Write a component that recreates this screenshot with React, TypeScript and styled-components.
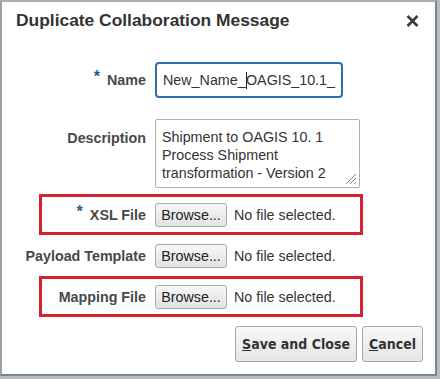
import React from "react";
import styled, { createGlobalStyle, css } from "styled-components";

const GlobalStyle = createGlobalStyle`
  html, body {
    margin: 0;
    padding: 0;
    background: #b8bdc2;
  }
  * {
    box-sizing: border-box;
  }
`;

const Dialog = styled.div`
  width: 437px;
  height: 376px;
  background: #ffffff;
  border: 2px solid #7c848c;
  border-top-color: #a9aeb3;
  border-left-color: #9aa1a8;
  display: flex;
  flex-direction: column;
  font-family: "Liberation Sans", Arial, sans-serif;
  color: #333333;
`;

const Header = styled.div`
  height: 60px;
  padding: 8px 16px 0 14px;
  display: flex;
  align-items: flex-start;
  justify-content: space-between;
`;

const Title = styled.h1`
  margin: 0;
  font-size: 17.4px;
  line-height: 20px;
  font-weight: bold;
  color: #333333;
`;

const CloseButton = styled.button`
  margin-top: 5px;
  padding: 0;
  border: 0;
  background: none;
  width: 13px;
  height: 12px;
  display: flex;
  cursor: pointer;
`;

const Form = styled.div`
  display: flex;
  flex-direction: column;
  padding-left: 37px;
`;

const Row = styled.div<{ $highlight?: boolean; $top?: boolean; $gap?: number }>`
  width: 324px;
  min-height: 41px;
  border: 3px solid ${(p) => (p.$highlight ? "#d8222d" : "transparent")};
  margin-top: ${(p) => p.$gap ?? 0}px;
  display: flex;
  align-items: ${(p) => (p.$top ? "flex-start" : "center")};
  gap: 9px;
`;

const Label = styled.div<{ $top?: boolean }>`
  width: 104px;
  flex: none;
  display: flex;
  justify-content: flex-end;
  white-space: nowrap;
  font-size: 14.3px;
  line-height: 18px;
  font-weight: bold;
  color: #484848;
  ${(p) =>
    p.$top &&
    css`
      padding-top: 10px;
    `}
`;

const Required = styled.span`
  color: #1d5ca4;
  font-size: 16px;
  position: relative;
  top: -3px;
  margin-right: 7px;
`;

const TextInput = styled.div`
  width: 188px;
  height: 36px;
  border: 2px solid #2f6cb3;
  border-radius: 4px;
  padding: 0 6px;
  display: flex;
  align-items: center;
  font-size: 14.3px;
  color: #333333;
  white-space: nowrap;
`;

const Caret = styled.span`
  display: inline-block;
  width: 1px;
  height: 17px;
  background: #222;
  vertical-align: -3px;
`;

const TextArea = styled.div`
  position: relative;
  width: 205px;
  height: 69px;
  border: 1px solid #aeb0b3;
  border-radius: 2px;
  padding: 8px 6px 0;
  font-size: 14.3px;
  line-height: 18.2px;
  color: #333333;
`;

const Grip = styled.svg`
  position: absolute;
  right: 2px;
  bottom: 2px;
`;

const FileField = styled.div`
  display: flex;
  align-items: center;
  gap: 7px;
`;

const Browse = styled.button`
  width: 72px;
  height: 24px;
  padding: 0;
  border: 1px solid #a7a9ab;
  border-radius: 3px;
  background: linear-gradient(#f6f6f6, #e2e2e2);
  font-family: "Liberation Sans", Arial, sans-serif;
  font-size: 14.3px;
  color: #222222;
`;

const FileStatus = styled.span`
  font-size: 14.3px;
  color: #333333;
`;

const Footer = styled.div`
  margin-top: 9px;
  padding-right: 12px;
  display: flex;
  justify-content: flex-end;
  gap: 5px;
`;

const ActionButton = styled.button`
  height: 36px;
  padding: 0 6px;
  border: 1px solid #a5a7aa;
  border-radius: 3px;
  background: linear-gradient(#f8f8f8, #e4e5e6);
  font-family: "DejaVu Sans Condensed", "DejaVu Sans", Verdana, sans-serif;
  font-stretch: condensed;
  font-size: 14px;
  font-weight: bold;
  color: #333333;
`;

const FileRow: React.FC<{ label: string; required?: boolean; highlight?: boolean; gap?: number }> = ({
  label,
  required,
  highlight,
  gap,
}) => (
  <Row $highlight={highlight} $gap={gap}>
    <Label>
      {required && <Required>*</Required>}
      {label}
    </Label>
    <FileField>
      <Browse>Browse...</Browse>
      <FileStatus>No file selected.</FileStatus>
    </FileField>
  </Row>
);

export default function App() {
  return (
    <>
      <GlobalStyle />
      <Dialog>
        <Header>
          <Title>Duplicate Collaboration Message</Title>
          <CloseButton aria-label="Close">
            <svg width="13" height="12" viewBox="0 0 13 12">
              <path d="M1.5 1 L11.5 11 M11.5 1 L1.5 11" stroke="#3c3c3c" strokeWidth="2.6" />
            </svg>
          </CloseButton>
        </Header>
        <Form>
          <Row $gap={-3}>
            <Label>
              <Required>*</Required>
              Name
            </Label>
            <TextInput>
              New_Name_<Caret />OAGIS_10.1_
            </TextInput>
          </Row>
          <Row $top $gap={15}>
            <Label $top>Description</Label>
            <TextArea>
              Shipment to OAGIS 10. 1
              <br />
              Process Shipment
              <br />
              transformation - Version 2
              <Grip width="14" height="14" viewBox="0 0 14 14">
                <path d="M13 3 L3 13 M13 7 L7 13 M13 11 L11 13" stroke="#8a8a8a" strokeWidth="1" />
              </Grip>
            </TextArea>
          </Row>
          <FileRow label="XSL File" required highlight gap={3} />
          <FileRow label="Payload Template" />
          <FileRow label="Mapping File" highlight />
        </Form>
        <Footer>
          <ActionButton>
            <u>S</u>ave and Close
          </ActionButton>
          <ActionButton>
            <u>C</u>ancel
          </ActionButton>
        </Footer>
      </Dialog>
    </>
  );
}
